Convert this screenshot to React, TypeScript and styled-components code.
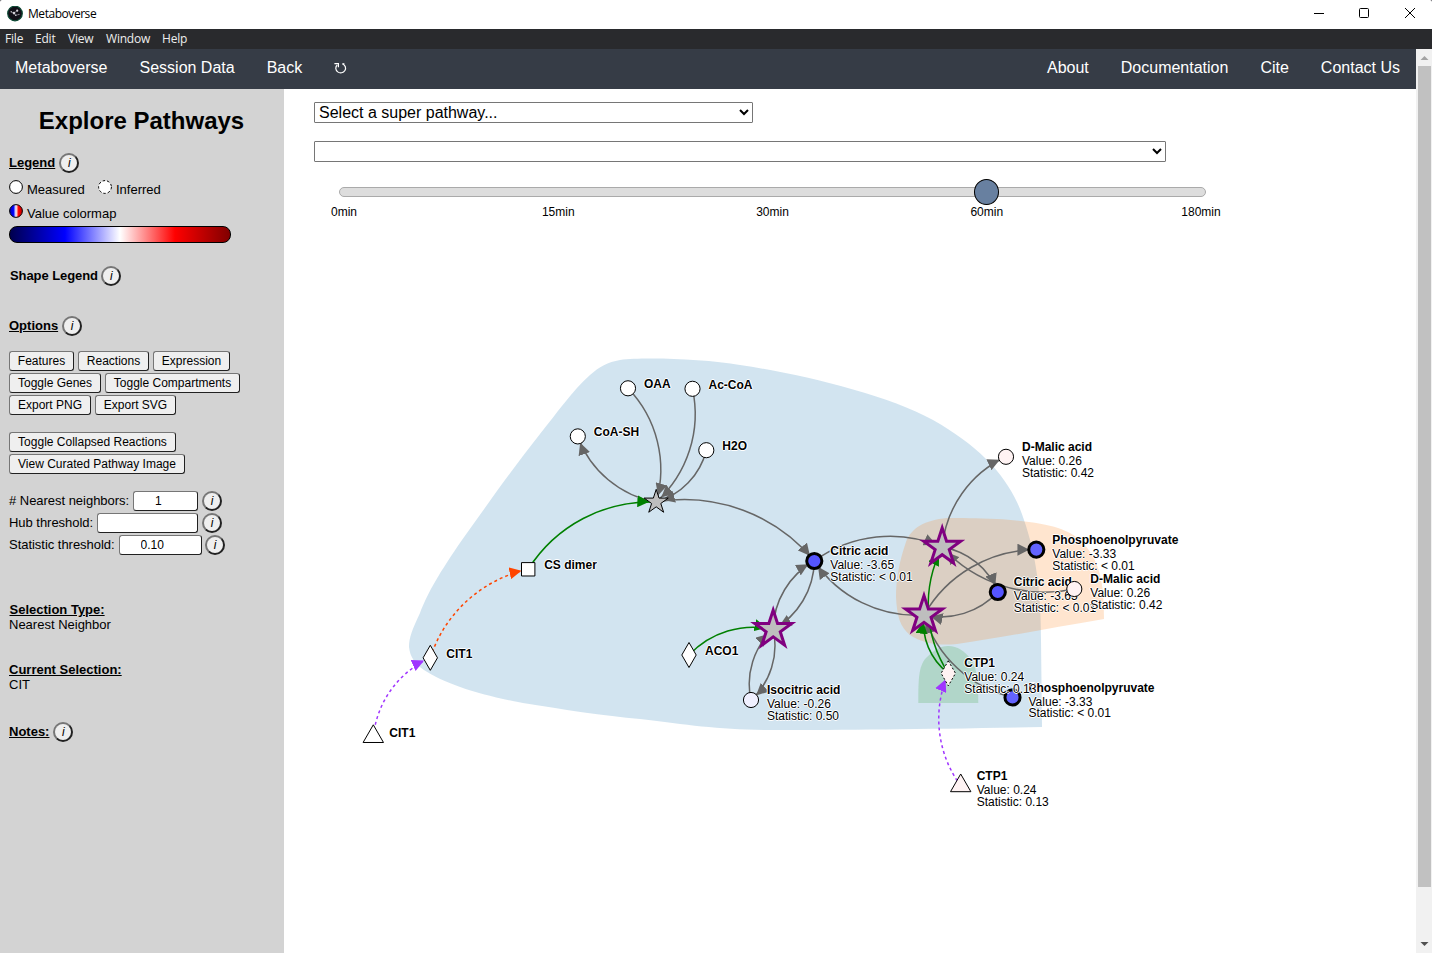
import React from "react";
import styled, { createGlobalStyle } from "styled-components";

const GlobalStyle = createGlobalStyle`
  * { box-sizing: border-box; }
  body {
    margin: 0;
    background: #4a4a50;
    font-family: "Liberation Sans", Arial, sans-serif;
    font-size: 13px;
    color: #000;
    overflow: hidden;
  }
`;

const Window = styled.div`
  display: flex;
  flex-direction: column;
  width: 1432px;
  height: 953px;
  background: #fff;
  border-radius: 2px 2px 0 0;
  overflow: hidden;
`;

const TitleBar = styled.header`
  display: flex;
  align-items: center;
  flex: none;
  height: 29px;
  padding: 0 16px 2px 7px;
  font: 12px/16px "Open Sans", "Noto Sans", sans-serif;
`;

const TitleText = styled.span`
  flex: 1;
  margin-left: 5px;
  letter-spacing: -0.45px;
`;

const WindowButtons = styled.div`
  display: flex;
  gap: 34px;

  svg {
    display: block;
  }
`;

const MenuBar = styled.nav`
  display: flex;
  flex: none;
  height: 20px;
  padding-left: 5px;
  background: #292a2d;
  color: #eee;
  font: 12px/20px "Open Sans", "Noto Sans", sans-serif;
  letter-spacing: -0.2px;
`;

const MenuItem = styled.span<{ $width: number }>`
  width: ${(p) => p.$width}px;
  white-space: nowrap;
`;

const Viewport = styled.div`
  display: flex;
  flex: 1;
  min-height: 0;
`;

const Page = styled.div`
  display: flex;
  flex-direction: column;
  width: 1416px;
`;

const NavBar = styled.nav`
  display: flex;
  flex: none;
  gap: 32px;
  height: 40px;
  padding: 0 16px 0 15px;
  background: #363c46;
  color: #fff;
  font-size: 16px;
  line-height: 37px;
`;

const NavSpacer = styled.span`
  flex: 1;
`;

const NavIcon = styled.span`
  padding-top: 12px;
  margin-left: -1px;

  svg {
    display: block;
  }
`;

const Body = styled.div`
  display: flex;
  flex: 1;
  min-height: 0;
`;

const Sidebar = styled.aside`
  flex: none;
  width: 284px;
  padding: 18px 9px 0;
  background: #d3d3d3;
`;

const Title = styled.h1`
  margin: 0 0 18px -1px;
  font-size: 24px;
  line-height: 28px;
  text-align: center;
`;

const Row = styled.div<{ $h?: number; $mt?: number; $gap?: number; $indent?: number }>`
  display: flex;
  align-items: center;
  gap: ${(p) => p.$gap ?? 4}px;
  height: ${(p) => p.$h ?? 20}px;
  margin-top: ${(p) => p.$mt ?? 0}px;
  padding-left: ${(p) => p.$indent ?? 0}px;
  white-space: nowrap;

  > b,
  > label {
    padding-bottom: 2px;
  }
`;

const Heading = styled.b<{ $plain?: boolean }>`
  line-height: 15px;
  text-decoration: ${(p) => (p.$plain ? "none" : "underline")};
  letter-spacing: ${(p) => (p.$plain ? "-0.08px" : "0")};
`;

const InfoButton = styled.button`
  width: 20px;
  height: 20px;
  padding: 0;
  border: 2px solid;
  border-color: #767676 #212121 #212121 #767676;
  border-radius: 50%;
  background: #efefef;
  font: italic 12px/15px "Liberation Sans", Arial, sans-serif;
  text-align: center;
  color: #000;
`;

const KeyIcon = styled.svg`
  flex: none;
  width: 14px;
  height: 14px;
  margin-top: -4px;
`;

const KeyLabel = styled.span<{ $w?: number }>`
  width: ${(p) => (p.$w ? p.$w + "px" : "auto")};
`;

const ColorBar = styled.div`
  width: 222px;
  height: 17px;
  margin-top: 3px;
  border: 1px solid #000;
  border-radius: 8px;
  background: linear-gradient(90deg, #00004d, #0000ff 25%, #ffffff 50%, #ff0000 75%, #800000);
`;

const Button = styled.button<{ $w: number }>`
  width: ${(p) => p.$w}px;
  height: 20px;
  padding: 0;
  border: 1px solid;
  border-color: #767676 #212121 #212121 #767676;
  border-radius: 3px;
  background: #efefef;
  font: 12px/18px "Liberation Sans", Arial, sans-serif;
  color: #000;
`;

const Field = styled.input<{ $w: number }>`
  width: ${(p) => p.$w}px;
  height: 20px;
  padding: 0 0 0 21px;
  border: 1px solid;
  border-color: #767676 #212121 #212121 #767676;
  border-radius: 3px;
  background: #fff;
  font: 12px "Liberation Sans", Arial, sans-serif;
`;

const FieldLabel = styled.label<{ $w: number }>`
  width: ${(p) => p.$w}px;
  letter-spacing: -0.03px;
`;

const Block = styled.div<{ $mt: number; $indent?: number }>`
  margin-top: ${(p) => p.$mt}px;
  padding-left: ${(p) => p.$indent ?? 0}px;
  line-height: 15px;
`;

const Main = styled.main`
  display: flex;
  flex-direction: column;
  flex: 1;
`;

const PathwaySelect = styled.select<{ $w: number; $mt: number }>`
  width: ${(p) => p.$w}px;
  height: 21px;
  margin: ${(p) => p.$mt}px 0 0 30px;
  padding-right: 1px;
  border: 1px solid #767676;
  border-radius: 1px;
  background: #fff;
  font: 16px "Liberation Sans", Arial, sans-serif;
  color: #000;
`;

const Track = styled.div`
  position: relative;
  width: 867px;
  height: 10px;
  margin: 25px 0 0 55px;
  border: 1px solid #aaa;
  border-radius: 5px;
  background: #ddd;
`;

const Handle = styled.span`
  position: absolute;
  top: -9px;
  left: 634px;
  width: 25px;
  height: 26px;
  border: 1px solid #000;
  border-radius: 50%;
  background: #6880a0;
`;

const Ticks = styled.div`
  display: flex;
  justify-content: space-between;
  width: 907px;
  margin: 8px 0 0 35px;
  font-size: 12px;
  line-height: 14px;
`;

const Tick = styled.span`
  width: 50px;
  text-align: center;
`;

const Graph = styled.svg`
  display: block;
  flex: none;
  width: 1132px;
  height: 734px;
  font: 12px "Liberation Sans", Arial, sans-serif;

  text {
    text-shadow: 0 1px 0 #fff, 1px 0 0 #fff, 0 -1px 0 #fff, -1px 0 0 #fff;
  }
`;

const Scrollbar = styled.div`
  display: flex;
  flex-direction: column;
  align-items: center;
  justify-content: space-between;
  width: 16px;
  background: #f1f1f1;

  svg {
    display: block;
  }
`;

const Thumb = styled.div`
  width: 13px;
  height: 821px;
  margin-bottom: auto;
  margin-left: 1px;
  background: #c1c1c1;
`;

type Shape = "circle" | "square" | "diamond" | "triangle" | "star";

interface GraphNode {
  id: string;
  x: number;
  y: number;
  shape: Shape;
  label?: string;
  value?: string;
  stat?: string;
  fill?: string;
  strong?: boolean;
  inferred?: boolean;
}

const nodes: GraphNode[] = [
  { id: "oaa", x: 628, y: 388.3, shape: "circle", label: "OAA" },
  { id: "accoa", x: 692.5, y: 388.8, shape: "circle", label: "Ac-CoA" },
  { id: "coash", x: 577.8, y: 436.4, shape: "circle", label: "CoA-SH" },
  { id: "h2o", x: 706.3, y: 450.2, shape: "circle", label: "H2O" },
  { id: "r1", x: 656.2, y: 502, shape: "star" },
  { id: "cs", x: 528.2, y: 569.3, shape: "square", label: "CS dimer" },
  { id: "cit1", x: 430.3, y: 657.8, shape: "diamond", label: "CIT1" },
  { id: "cit1g", x: 373.3, y: 736.6, shape: "triangle", label: "CIT1" },
  { id: "aco1", x: 689, y: 655, shape: "diamond", label: "ACO1" },
  { id: "r2", x: 773.2, y: 629.5, shape: "star", strong: true },
  { id: "r3", x: 942.2, y: 547.3, shape: "star", strong: true },
  { id: "r4", x: 924, y: 615, shape: "star", strong: true },
  { id: "citA", x: 814.3, y: 561, shape: "circle", label: "Citric acid", value: "-3.65", stat: "< 0.01", fill: "#5555ff", strong: true },
  { id: "iso", x: 751, y: 700, shape: "circle", label: "Isocitric acid", value: "-0.26", stat: "0.50", fill: "#f0f0ff" },
  { id: "malA", x: 1006, y: 456.8, shape: "circle", label: "D-Malic acid", value: "0.26", stat: "0.42", fill: "#fff3f3" },
  { id: "pepA", x: 1036.3, y: 549.6, shape: "circle", label: "Phosphoenolpyruvate", value: "-3.33", stat: "< 0.01", fill: "#6363ff", strong: true },
  { id: "citB", x: 997.8, y: 592, shape: "circle", label: "Citric acid", value: "-3.65", stat: "< 0.01", fill: "#5555ff", strong: true },
  { id: "malB", x: 1074.3, y: 589, shape: "circle", label: "D-Malic acid", value: "0.26", stat: "0.42", fill: "#fff3f3" },
  { id: "pepB", x: 1012.5, y: 697.4, shape: "circle", label: "Phosphoenolpyruvate", value: "-3.33", stat: "< 0.01", fill: "#6363ff", strong: true },
  { id: "ctp", x: 948.3, y: 673.3, shape: "diamond", label: "CTP1", value: "0.24", stat: "0.13", fill: "#fff3f3", inferred: true },
  { id: "ctpg", x: 960.7, y: 785.8, shape: "triangle", label: "CTP1", value: "0.24", stat: "0.13", fill: "#fff3f3" },
];

type LinkKind = "reaction" | "catalyst" | "component" | "gene";

const linkColors: Record<LinkKind, string> = {
  reaction: "#666666",
  catalyst: "#008000",
  component: "#ff4500",
  gene: "#a035ff",
};

const links: [string, string, LinkKind][] = [
  ["oaa", "r1", "reaction"],
  ["accoa", "r1", "reaction"],
  ["h2o", "r1", "reaction"],
  ["r1", "coash", "reaction"],
  ["r1", "citA", "reaction"],
  ["cs", "r1", "catalyst"],
  ["cit1", "cs", "component"],
  ["cit1g", "cit1", "gene"],
  ["r2", "citA", "reaction"],
  ["citA", "r2", "reaction"],
  ["r2", "iso", "reaction"],
  ["iso", "r2", "reaction"],
  ["aco1", "r2", "catalyst"],
  ["citA", "r3", "reaction"],
  ["r4", "citA", "reaction"],
  ["r3", "malA", "reaction"],
  ["malB", "r3", "reaction"],
  ["r3", "citB", "reaction"],
  ["citB", "r4", "reaction"],
  ["r4", "pepA", "reaction"],
  ["pepB", "r4", "reaction"],
  ["ctp", "r3", "catalyst"],
  ["ctp", "r4", "catalyst"],
  ["ctpg", "ctp", "gene"],
];

const byId = Object.fromEntries(nodes.map((n) => [n.id, n]));

function arc(source: string, target: string) {
  const a = byId[source];
  const b = byId[target];
  const r = Math.hypot(b.x - a.x, b.y - a.y);
  return `M${a.x},${a.y}A${r},${r} 0 0,1 ${b.x},${b.y}`;
}

function starPath(radius: number) {
  const points = Array.from({ length: 10 }, (_, i) => {
    const r = i % 2 ? radius * 0.381966 : radius;
    const a = (Math.PI * i) / 5;
    return `${(r * Math.sin(a)).toFixed(2)},${(-r * Math.cos(a)).toFixed(2)}`;
  });
  return `M${points.join("L")}Z`;
}

function symbolPath(n: GraphNode) {
  switch (n.shape) {
    case "circle":
      return "M7.57,0A7.57,7.57 0 1,1 -7.57,0A7.57,7.57 0 1,1 7.57,0Z";
    case "square":
      return "M-6.7,-6.7H6.7V6.7H-6.7Z";
    case "diamond":
      return "M0,-12.5L7.2,0L0,12.5L-7.2,0Z";
    case "triangle":
      return "M0,-11.8L10.2,5.9H-10.2Z";
    default:
      return starPath(n.strong ? 19.4 : 12.66);
  }
}

function NodeMark({ node: n }: { node: GraphNode }) {
  const star = n.shape === "star";
  return (
    <g transform={`translate(${n.x},${n.y})`}>
      <path
        d={symbolPath(n)}
        fill={star ? "#bebebe" : n.fill ?? "#fff"}
        stroke={star && n.strong ? "#800080" : "#000"}
        strokeWidth={n.strong ? 3 : 1}
        strokeDasharray={n.inferred ? "2 2" : undefined}
        strokeMiterlimit={10}
      />
      {n.label && (
        <text x={16} y={n.value ? -5.9 : 0} fontWeight="bold">
          {n.label}
        </text>
      )}
      {n.value && (
        <>
          <text x={16} y={8.1}>{`Value: ${n.value}`}</text>
          <text x={16} y={20.1}>{`Statistic: ${n.stat}`}</text>
        </>
      )}
    </g>
  );
}

function PathwayGraph() {
  return (
    <Graph viewBox="284 219 1132 734">
      <defs>
        {(Object.keys(linkColors) as LinkKind[]).map((k) => (
          <marker
            key={k}
            id={`arrow-${k}`}
            viewBox="0 -5 10 10"
            refX={15.7}
            refY={0}
            markerWidth={12}
            markerHeight={12}
            markerUnits="userSpaceOnUse"
            orient="auto"
          >
            <path d="M0,-5L10,0L0,5" fill={linkColors[k]} />
          </marker>
        ))}
      </defs>
      <g fillOpacity={0.2}>
        <path
          fill="#1f77b4"
          d="M1042,727L1041,640C1041,590 1036,555 1024,520C1011,479 982,448 933,420C885,394 800,374 740,365C705,359 645,357 620,360C608,362 599,367 590,375C572,391 557,413 540,434C510,472 485,508 462,540C440,572 428,592 420,613C412,630 409,638 409,647C410,657 415,664 424,670C445,684 480,695 523,703C560,709 605,716 640,719C690,725 720,730 773,730C850,730 930,729 1042,727Z"
        />
        <path
          fill="#ff7f0e"
          d="M1104,619C1104,585 1101,560 1080,540C1068,529 1048,522 997,519C975,518 962,518 947,518C925,520 911,528 906,542C899,562 896,580 896,597C897,616 900,627 910,635C922,643 938,646 957,644C1000,638 1050,628 1104,619Z"
        />
        <path
          fill="#2ca02c"
          d="M918.3,703C918.3,680 918.5,666 926,658C934,650 940,646 948,646C958,646 964,651 970,658C977,667 978,680 978.3,703Z"
        />
      </g>
      <g fill="none" strokeWidth={1.5}>
        {links.map(([s, t, kind]) => (
          <path
            key={s + t}
            d={arc(s, t)}
            stroke={linkColors[kind]}
            strokeDasharray={kind === "gene" || kind === "component" ? "3 3" : undefined}
            markerEnd={`url(#arrow-${kind})`}
          />
        ))}
      </g>
      {nodes.map((n) => (
        <NodeMark key={n.id} node={n} />
      ))}
    </Graph>
  );
}

function AppLogo() {
  return (
    <svg width="16" height="16" viewBox="0 0 16 16">
      <circle cx="8" cy="7.5" r="7.3" fill="#120f18" stroke="#0d4a35" strokeWidth="1.2" />
      <path d="M4 6l3 1 3-2.3M7 7l1.5 2.2L12 8.5" stroke="#77727f" strokeWidth=".8" fill="none" />
      <g fill="#d4d0d8">
        <circle cx="7" cy="7.1" r="1.3" />
        <circle cx="10.2" cy="4.7" r="1.1" />
        <circle cx="4.2" cy="5.8" r=".7" />
        <circle cx="8.8" cy="9.2" r=".8" />
        <circle cx="12" cy="8.3" r=".5" />
      </g>
    </svg>
  );
}

const Info = () => <InfoButton>i</InfoButton>;

export default function App() {
  return (
    <Window>
      <GlobalStyle />
      <TitleBar>
        <AppLogo />
        <TitleText>Metaboverse</TitleText>
        <WindowButtons>
          <svg width="12" height="12" viewBox="0 0 12 12" stroke="#000" fill="none">
            <path d="M2 5.5h10" />
          </svg>
          <svg width="12" height="12" viewBox="0 0 12 12" stroke="#000" fill="none">
            <rect x="1.5" y="0.5" width="9" height="9" rx="1" />
          </svg>
          <svg width="12" height="12" viewBox="0 0 12 12" stroke="#000" fill="none">
            <path d="M1 0l10 10M11 0L1 10" />
          </svg>
        </WindowButtons>
      </TitleBar>
      <MenuBar>
        <MenuItem $width={30}>File</MenuItem>
        <MenuItem $width={33}>Edit</MenuItem>
        <MenuItem $width={38}>View</MenuItem>
        <MenuItem $width={56}>Window</MenuItem>
        <MenuItem $width={40}>Help</MenuItem>
      </MenuBar>
      <Viewport>
        <Page>
          <NavBar>
            <span>Metaboverse</span>
            <span>Session Data</span>
            <span>Back</span>
            <NavIcon>
              <svg width="14" height="14" viewBox="0 0 14 14" fill="none" stroke="#fff" strokeWidth="1.2">
                <path d="M4.2 4A4.9 4.6 0 1 0 9.6 3" />
                <path d="M1.4 2.6H5.4V6.2" />
                <path d="M9.4 2.8H11.4" />
              </svg>
            </NavIcon>
            <NavSpacer />
            <span>About</span>
            <span>Documentation</span>
            <span>Cite</span>
            <span>Contact Us</span>
          </NavBar>
          <Body>
            <Sidebar>
              <Title>Explore Pathways</Title>
              <Row>
                <Heading>Legend</Heading>
                <Info />
              </Row>
              <Row $mt={6}>
                <KeyIcon viewBox="0 0 14 14">
                  <circle cx="7" cy="7" r="6.4" fill="#fff" stroke="#000" />
                </KeyIcon>
                <KeyLabel $w={67}>Measured</KeyLabel>
                <KeyIcon viewBox="0 0 14 14">
                  <circle cx="7" cy="7" r="6.4" fill="#fff" stroke="#000" strokeDasharray="2.5 2" />
                </KeyIcon>
                <KeyLabel>Inferred</KeyLabel>
              </Row>
              <Row $mt={4}>
                <KeyIcon viewBox="0 0 14 14">
                  <defs>
                    <linearGradient id="colormap-key">
                      <stop offset="0" stopColor="#0000b0" />
                      <stop offset=".3" stopColor="#0000ff" />
                      <stop offset=".5" stopColor="#fff" />
                      <stop offset=".7" stopColor="#ff0000" />
                      <stop offset="1" stopColor="#c00000" />
                    </linearGradient>
                  </defs>
                  <circle cx="7" cy="7" r="6.4" fill="url(#colormap-key)" stroke="#000" />
                </KeyIcon>
                <KeyLabel>Value colormap</KeyLabel>
              </Row>
              <ColorBar />
              <Row $mt={23} $indent={1} $gap={3.4}>
                <Heading $plain>Shape Legend</Heading>
                <Info />
              </Row>
              <Row $mt={30}>
                <Heading>Options</Heading>
                <Info />
              </Row>
              <Row $mt={15}>
                <Button $w={65}>Features</Button>
                <Button $w={71}>Reactions</Button>
                <Button $w={77}>Expression</Button>
              </Row>
              <Row $mt={2}>
                <Button $w={92}>Toggle Genes</Button>
                <Button $w={135}>Toggle Compartments</Button>
              </Row>
              <Row $mt={2}>
                <Button $w={82}>Export PNG</Button>
                <Button $w={81}>Export SVG</Button>
              </Row>
              <Row $mt={17}>
                <Button $w={167}>Toggle Collapsed Reactions</Button>
              </Row>
              <Row $mt={2}>
                <Button $w={176}>View Curated Pathway Image</Button>
              </Row>
              <Row $mt={17}>
                <FieldLabel $w={120}># Nearest neighbors:</FieldLabel>
                <Field $w={65} defaultValue="1" />
                <Info />
              </Row>
              <Row $mt={2}>
                <FieldLabel $w={84}>Hub threshold:</FieldLabel>
                <Field $w={101} />
                <Info />
              </Row>
              <Row $mt={2} $gap={3.5}>
                <FieldLabel $w={106}>Statistic threshold:</FieldLabel>
                <Field $w={83} defaultValue="0.10" />
                <Info />
              </Row>
              <Block $mt={47} $indent={0.5}>
                <Heading>Selection Type:</Heading>
              </Block>
              <Block $mt={0}>Nearest Neighbor</Block>
              <Block $mt={30}>
                <Heading>Current Selection:</Heading>
              </Block>
              <Block $mt={0}>CIT</Block>
              <Row $mt={30}>
                <Heading>Notes:</Heading>
                <Info />
              </Row>
            </Sidebar>
            <Main>
              <PathwaySelect $w={439} $mt={13}>
                <option>Select a super pathway...</option>
              </PathwaySelect>
              <PathwaySelect $w={852} $mt={18} />
              <Track>
                <Handle />
              </Track>
              <Ticks>
                <Tick>0min</Tick>
                <Tick>15min</Tick>
                <Tick>30min</Tick>
                <Tick>60min</Tick>
                <Tick>180min</Tick>
              </Ticks>
              <PathwayGraph />
            </Main>
          </Body>
        </Page>
        <Scrollbar>
          <svg width="16" height="17" viewBox="0 0 16 17">
            <path d="M4.5 11L8.5 7L12.5 11Z" fill="#a3a3a3" />
          </svg>
          <Thumb />
          <svg width="16" height="17" viewBox="0 0 16 17">
            <path d="M4.5 6L8.5 10L12.5 6Z" fill="#505050" />
          </svg>
        </Scrollbar>
      </Viewport>
    </Window>
  );
}
